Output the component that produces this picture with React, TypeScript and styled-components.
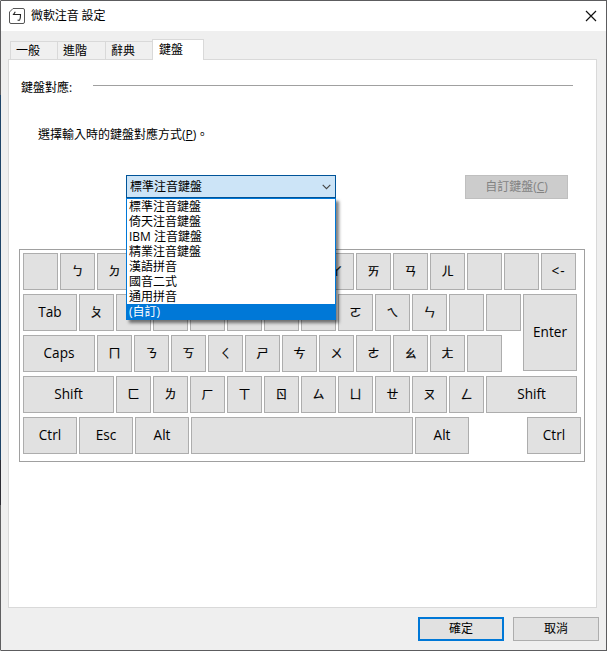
import React from "react";
import styled, { createGlobalStyle, css } from "styled-components";

const GlobalStyle = createGlobalStyle`
  * { box-sizing: border-box; }
  body {
    margin: 0;
    background: #efefef;
    color: #000;
    font: 12px/16px "Open Sans", "Noto Sans CJK TC", sans-serif;
  }
`;

const Dialog = styled.div`
  width: 607px;
  height: 651px;
  display: flex;
  flex-direction: column;
  background: #efefef;
  border: 1px solid #5c5c5e;
  border-left-color: transparent;
  background-image: linear-gradient(#efefef, #efefef),
    linear-gradient(#5f5f61 95px, #1f4468 95px, #1f4468 460px, #2c2c34 460px, #2c2c34 505px, #5f5f61 505px);
  background-clip: padding-box, border-box;
  background-origin: padding-box, border-box;
`;

const TitleBar = styled.header`
  height: 30px;
  flex: none;
  display: flex;
  align-items: center;
  background: #fff;
  padding: 0 9px 0 8px;
`;

const Title = styled.h1`
  flex: 1;
  margin: 0 0 0 5px;
  font-size: 12px;
  font-weight: 400;
  line-height: 16px;
  letter-spacing: -0.1px;
`;

const TabStrip = styled.nav`
  height: 28px;
  flex: none;
  display: flex;
  align-items: flex-end;
  padding-left: 9px;
`;

const Tab = styled.button<{ $active?: boolean; $width: number }>`
  width: ${(p) => p.$width}px;
  height: 18px;
  padding: 0 0 0 5px;
  border: 1px solid #d9d9d9;
  border-width: 1px 0 0 1px;
  background: #f0f0f0;
  color: #000;
  font: inherit;
  line-height: 17px;
  text-align: left;
  ${(p) =>
    p.$active &&
    css`
      height: 21px;
      margin-bottom: -1px;
      padding-left: 6px;
      padding-bottom: 2px;
      border-right-width: 1px;
      background: #fff;
      z-index: 1;
    `}
`;

const Panel = styled.main`
  width: 589px;
  height: 549px;
  flex: none;
  margin-left: 7px;
  padding: 0 10px;
  background: #fff;
  border: 1px solid #d9d9d9;
`;

const GroupHeading = styled.div`
  display: flex;
  height: 20px;
  margin-top: 20px;
  padding: 0 13px 0 2px;
  line-height: 16px;
`;

const GroupLabel = styled.span`
  width: 72px;
`;

const Rule = styled.span`
  flex: 1;
  height: 1px;
  margin-top: 5px;
  background: #a0a0a0;
`;

const Prompt = styled.label`
  display: block;
  margin: 27px 0 0 19px;
  line-height: 16px;
`;

const ChoiceRow = styled.div`
  display: flex;
  justify-content: space-between;
  align-items: flex-start;
  height: 74px;
  margin-top: 32px;
  padding: 0 18px 0 107px;
`;

const Select = styled.div`
  position: relative;
  width: 210px;
`;

const SelectBox = styled.div`
  height: 23px;
  display: flex;
  align-items: center;
  justify-content: space-between;
  padding: 0 4px 0 3px;
  background: #cce4f7;
  border: 1px solid #005499;
`;

const Options = styled.ul`
  position: absolute;
  z-index: 2;
  top: 23px;
  left: 0;
  width: 210px;
  margin: 0;
  padding: 0;
  list-style: none;
  background: #fff;
  border: 1px solid #0078d7;
  box-shadow: 3px 3px 3px rgba(0, 0, 0, 0.5);
`;

const Option = styled.li<{ $selected?: boolean }>`
  height: 15px;
  padding-left: 2px;
  line-height: 15px;
  color: ${(p) => (p.$selected ? "#fff" : "#000")};
  background: ${(p) => (p.$selected ? "#0078d7" : "#fff")};
`;

const Button = styled.button<{ $kind?: "primary" | "disabled" }>`
  width: ${(p) => (p.$kind === "disabled" ? 103 : 86)}px;
  height: 24px;
  padding: 0;
  background: #e1e1e1;
  border: 1px solid #adadad;
  color: #000;
  font: inherit;
  line-height: 20px;
  ${(p) => p.$kind === "primary" && "border: 2px solid #0078d7;"}
  ${(p) =>
    p.$kind === "disabled" &&
    "background: #cccccc; border-color: #bfbfbf; color: #838383;"}
`;

const Keyboard = styled.section`
  width: 566px;
  height: 213px;
  display: flex;
  flex-direction: column;
  gap: 4px;
  padding: 3px;
  border: 1px solid #a0a0a0;
`;

const KeyRow = styled.div`
  display: flex;
  gap: 2px;
`;

const KeyRows = styled.div`
  display: flex;
  flex-direction: column;
  gap: 4px;
  width: 498px;
`;

const Key = styled.div<{ $width?: number; $tall?: boolean; $offset?: number }>`
  width: ${(p) => p.$width ?? 35}px;
  height: ${(p) => (p.$tall ? 77 : 37)}px;
  flex: none;
  display: flex;
  align-items: center;
  justify-content: center;
  margin-left: ${(p) => p.$offset ?? 0}px;
  padding-bottom: 1px;
  background: #e1e1e1;
  border: 1px solid #adadad;
  font-size: 13.6px;
  line-height: 20px;
`;

const Symbol = styled.span`
  font: 400 12px/20px "Noto Sans CJK TC", sans-serif;
  -webkit-text-stroke: 0.2px #000;
`;

const Spaced = styled.span`
  letter-spacing: 1px;
`;

const Footer = styled.footer`
  display: flex;
  justify-content: flex-end;
  gap: 9px;
  padding: 9px 7px 0 0;
`;

const AppIcon = () => (
  <svg width="17" height="17" viewBox="0 0 17 17" fill="none">
    <path d="M4 .5H14Q15.5 .5 15.5 2V14Q15.5 15.5 14 15.5H2Q.5 15.5 .5 14V4Z" stroke="#555" />
    <path d="M6.3 3.7L4.5 6.5H11.5Q11.5 10.6 10.7 11.8Q10.1 12.6 8.6 12.1" stroke="#222" strokeWidth="1.1" />
  </svg>
);

const CloseIcon = () => (
  <svg width="12" height="12" viewBox="0 0 12 12">
    <path d="M1 1L11 11M11 1L1 11" stroke="#111" strokeWidth="1.2" />
  </svg>
);

const Chevron = () => (
  <svg width="9" height="6" viewBox="0 0 9 6" fill="none">
    <path d="M.7 .8L4.5 4.6L8.3 .8" stroke="#444" strokeWidth="1.1" />
  </svg>
);

const options = ["標準注音鍵盤", "倚天注音鍵盤", "IBM 注音鍵盤", "精業注音鍵盤", "漢語拼音", "國音二式", "通用拼音", "(自訂)"];

const Symbols = ({ keys }: { keys: string[] }) => (
  <>
    {keys.map((k, i) => (
      <Key key={i}>{k && <Symbol>{k}</Symbol>}</Key>
    ))}
  </>
);

export default function App() {
  return (
    <>
      <GlobalStyle />
      <Dialog>
        <TitleBar>
          <AppIcon />
          <Title>微軟注音 設定</Title>
          <CloseIcon />
        </TitleBar>
        <TabStrip>
          <Tab $width={47}>一般</Tab>
          <Tab $width={48}>進階</Tab>
          <Tab $width={47}>辭典</Tab>
          <Tab $width={52} $active>鍵盤</Tab>
        </TabStrip>
        <Panel>
          <GroupHeading>
            <GroupLabel>鍵盤對應:</GroupLabel>
            <Rule />
          </GroupHeading>
          <Prompt>選擇輸入時的鍵盤對應方式(<u>P</u>)。</Prompt>
          <ChoiceRow>
            <Select>
              <SelectBox>
                標準注音鍵盤
                <Chevron />
              </SelectBox>
              <Options>
                {options.map((o, i) => (
                  <Option key={o} $selected={i === options.length - 1}>{o}</Option>
                ))}
              </Options>
            </Select>
            <Button $kind="disabled" disabled>自訂鍵盤(<u>C</u>)</Button>
          </ChoiceRow>
          <Keyboard>
            <KeyRow>
              <Symbols keys={["", "ㄅ", "ㄉ", "", "", "", "", "", "ㄚ", "ㄞ", "ㄢ", "ㄦ", "", ""]} />
              <Key><Spaced>&lt;-</Spaced></Key>
            </KeyRow>
            <KeyRow>
              <KeyRows>
                <KeyRow>
                  <Key $width={54}>Tab</Key>
                  <Symbols keys={["ㄆ", "", "", "", "", "", "", "ㄛ", "ㄟ", "ㄣ", "", ""]} />
                </KeyRow>
                <KeyRow>
                  <Key $width={72}>Caps</Key>
                  <Symbols keys={["ㄇ", "ㄋ", "ㄎ", "ㄑ", "ㄕ", "ㄘ", "ㄨ", "ㄜ", "ㄠ", "ㄤ", ""]} />
                </KeyRow>
              </KeyRows>
              <Key $width={54} $tall>Enter</Key>
            </KeyRow>
            <KeyRow>
              <Key $width={91}>Shift</Key>
              <Symbols keys={["ㄈ", "ㄌ", "ㄏ", "ㄒ", "ㄖ", "ㄙ", "ㄩ", "ㄝ", "ㄡ", "ㄥ"]} />
              <Key $width={91}>Shift</Key>
            </KeyRow>
            <KeyRow>
              <Key $width={54}>Ctrl</Key>
              <Key $width={54}>Esc</Key>
              <Key $width={54}>Alt</Key>
              <Key $width={222} />
              <Key $width={54}>Alt</Key>
              <Key $width={54} $offset={56}>Ctrl</Key>
            </KeyRow>
          </Keyboard>
        </Panel>
        <Footer>
          <Button $kind="primary">確定</Button>
          <Button>取消</Button>
        </Footer>
      </Dialog>
    </>
  );
}
